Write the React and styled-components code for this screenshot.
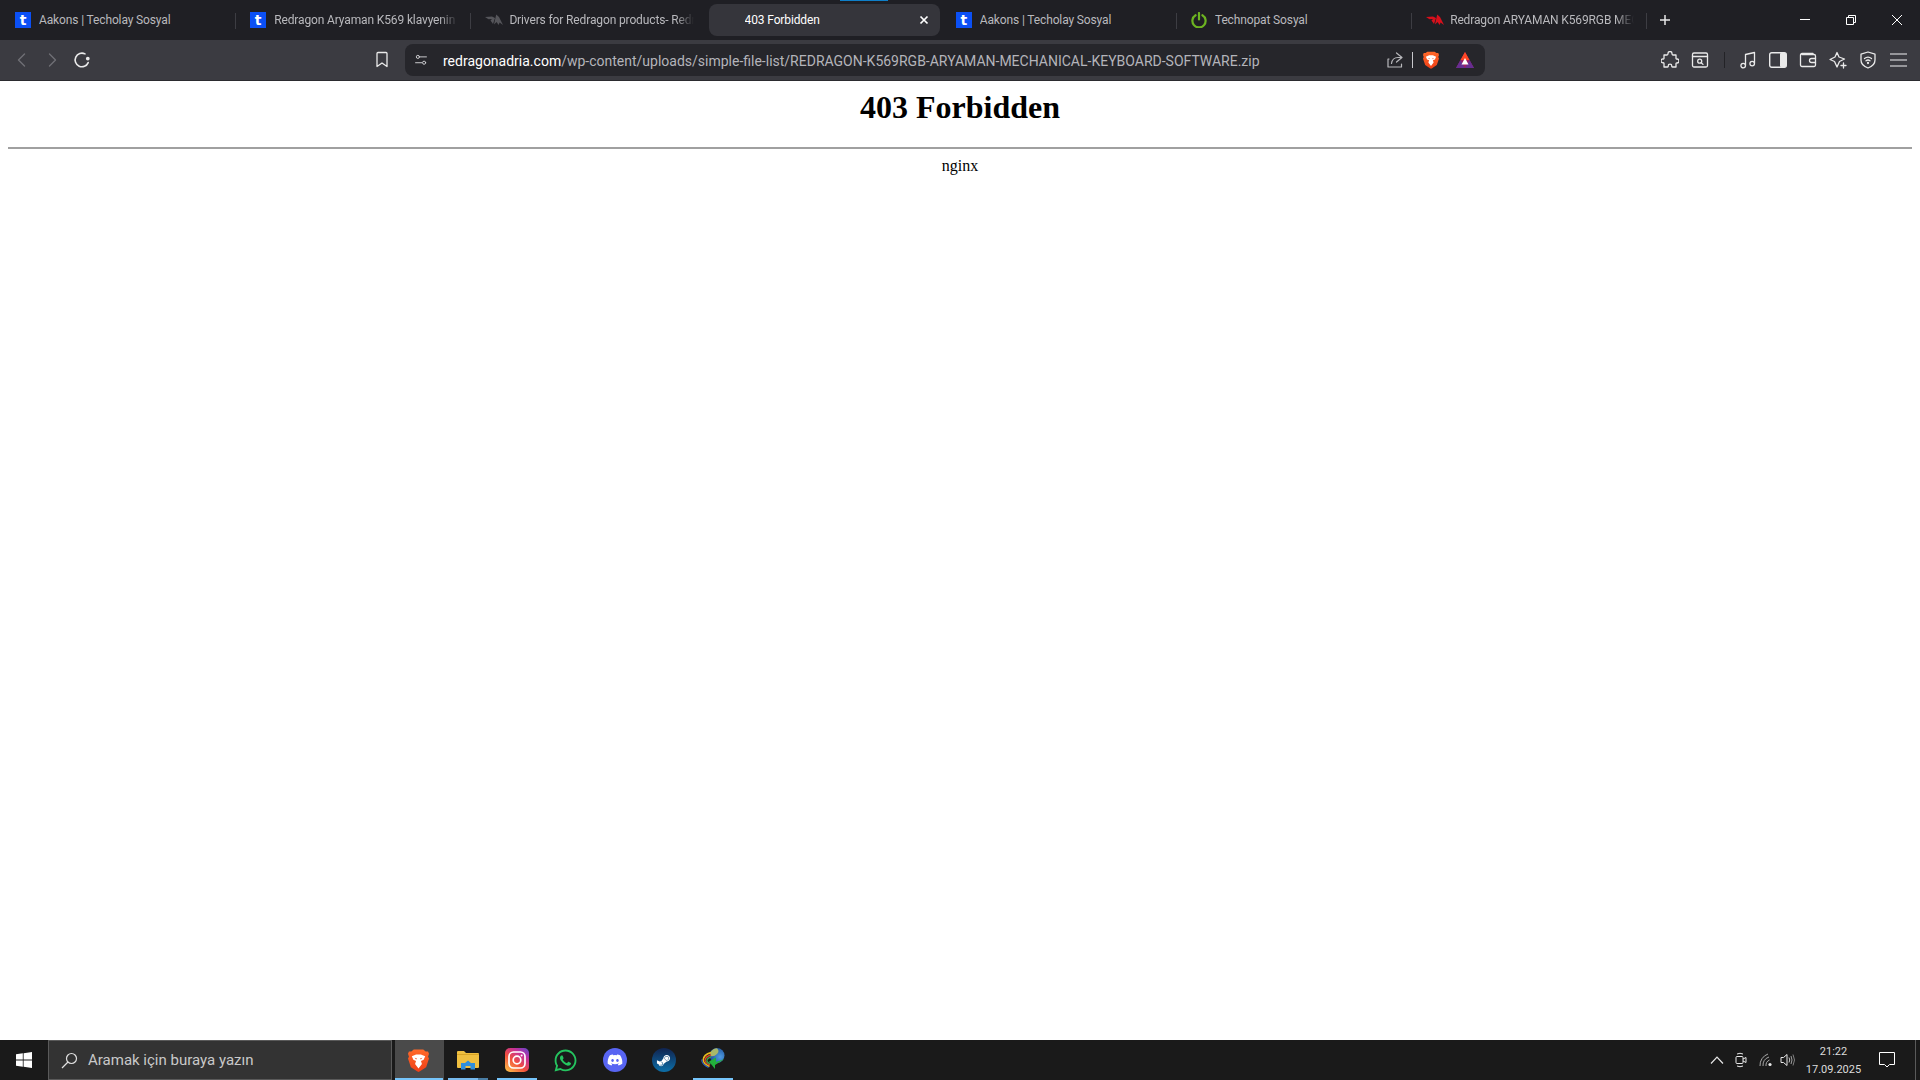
import React from 'react';
import styled, {createGlobalStyle} from 'styled-components';
import {FaDiscord, FaWhatsapp, FaSteamSymbol} from 'react-icons/fa';

const UI_FONT = `Roboto, "Open Sans", sans-serif`;

const tabs = [
	{title: 'Aakons | Techolay Sosyal', icon: 'techolay', sep: true},
	{title: 'Redragon Aryaman K569 klavyenin sürücüsü', icon: 'techolay', sep: true},
	{title: 'Drivers for Redragon products- Redragon', icon: 'dragonGray'},
	{title: '403 Forbidden', active: true},
	{title: 'Aakons | Techolay Sosyal', icon: 'techolay', sep: true},
	{title: 'Technopat Sosyal', icon: 'power', sep: true},
	{title: 'Redragon ARYAMAN K569RGB MECHANICAL', icon: 'dragonRed', sep: true}
];

const Stroke = ({size = 18, children, width = 1.4}) => (
	<svg width={size} height={size} viewBox="0 0 18 18" fill="none" stroke="currentColor" strokeWidth={width} strokeLinecap="round" strokeLinejoin="round">
		{children}
	</svg>
);

const Dragon = ({color}) => (
	<svg width="18" height="12" viewBox="0 0 18 12" fill={color}>
		<path d="M0 3 L7 2.4 L10 4 L8 10 L5.5 6.6 L7 5 L3.5 5.2 Z" />
		<path d="M9 10.5 L11.2 0.5 L14 3 L18 11 L14.6 8.6 L13.6 11 L11.6 8 Z" />
	</svg>
);

const PowerIcon = () => (
	<svg width="16" height="16" viewBox="0 0 16 16" fill="none" stroke="#6cb321" strokeWidth="2.2" strokeLinecap="round">
		<path d="M4.6 3.2 A6.6 6.6 0 1 0 11.4 3.2" />
		<path d="M8 1 V7.4" />
	</svg>
);

const Favicon = ({type}) => {
	if (type === 'techolay') return <TechBadge>t</TechBadge>;
	if (type === 'power') return <PowerIcon />;
	if (type === 'dragonRed') return <Dragon color="#d8101c" />;
	if (type === 'dragonGray') return <Dragon color="#55555a" />;
	return null;
};

const BraveIcon = ({id, width, height}) => (
	<svg width={width} height={height} viewBox="0 0 22 24">
		<defs>
			<linearGradient id={id} x1="0" y1="0" x2="0" y2="1">
				<stop offset="0" stopColor="#ff6a2a" />
				<stop offset="1" stopColor="#ef3f17" />
			</linearGradient>
		</defs>
		<path d="M6 0.5 H16 L18.5 2.5 L21 2.5 L22 5 L21 8 L22 10 L19 19 L12.5 23.2 L11 24 L9.5 23.2 L3 19 L0 10 L1 8 L0 5 L1 2.5 L3.5 2.5 Z" fill={`url(#${id})`} />
		<path d="M4 7.5 L8.5 5.6 H13.5 L18 7.5 L16.4 11.2 L13.6 12.4 L14.6 15.6 L11 20.4 L7.4 15.6 L8.4 12.4 L5.6 11.2 Z" fill="#fff" />
		<path d="M7 9.2 L9.4 9.9 L8.6 10.9 Z M15 9.2 L12.6 9.9 L13.4 10.9 Z" fill="#f0481c" />
	</svg>
);

const BatIcon = () => (
	<svg width="18" height="16" viewBox="0 0 18 16">
		<path d="M9 0 L18 16 H0 Z" fill="#9e1f63" />
		<path d="M9 0 L13.5 8 H4.5 Z" fill="#ff4724" />
		<path d="M0 16 L4.5 8 L9 16 Z" fill="#662d91" />
		<path d="M18 16 L13.5 8 L9 16 Z" fill="#662d91" />
		<path d="M9 6 L12.5 12.5 H5.5 Z" fill="#fff" />
	</svg>
);

const FolderIcon = () => (
	<svg width="22" height="20" viewBox="0 0 22 20">
		<path d="M0 2 a1 1 0 0 1 1 -1 H7 L9 3 H21 a1 1 0 0 1 1 1 V17 a1 1 0 0 1 -1 1 H1 a1 1 0 0 1 -1 -1 Z" fill="#f0c040" />
		<path d="M0 4 H22 V5 H0 Z" fill="#d9a526" />
		<path d="M4 19.5 V13 H8 L11 10.5 L14 13 H18 V19.5 H13.5 V16 H8.5 V19.5 Z" fill="#2f8fdc" />
	</svg>
);

const InstagramIcon = () => (
	<svg width="24" height="24" viewBox="0 0 24 24">
		<defs>
			<linearGradient id="ig" x1="0.1" y1="1" x2="0.9" y2="0">
				<stop offset="0" stopColor="#fdc04a" />
				<stop offset="0.4" stopColor="#f2503c" />
				<stop offset="0.75" stopColor="#c22f9c" />
				<stop offset="1" stopColor="#6a45c8" />
			</linearGradient>
		</defs>
		<rect width="24" height="24" rx="5" fill="url(#ig)" />
		<rect x="4" y="4" width="16" height="16" rx="4.5" fill="none" stroke="#fff" strokeWidth="1.7" />
		<circle cx="12" cy="12" r="3.8" fill="none" stroke="#fff" strokeWidth="1.7" />
		<circle cx="16.6" cy="7.4" r="1" fill="#fff" />
	</svg>
);

const IdmIcon = () => (
	<svg width="24" height="24" viewBox="0 0 24 24" fill="none">
		<defs>
			<radialGradient id="globe" cx="0.7" cy="0.6" r="0.7">
				<stop offset="0" stopColor="#4f9be0" />
				<stop offset="1" stopColor="#1c4f9a" />
			</radialGradient>
		</defs>
		<circle cx="16" cy="7.5" r="7.5" fill="url(#globe)" />
		<path d="M9.5 4 Q12 0.5 16 0.2 Q19 3 16 6 Q13 9 9.5 8 Z" fill="#a9b86a" />
		<path d="M10 4.6 Q2.5 6.5 2.2 12 Q2.5 16 8.5 18.5" stroke="#e6b81c" strokeWidth="1.6" />
		<path d="M10 7 Q4.5 8.5 4 12.5 Q4.5 15.5 9 17" stroke="#d9432a" strokeWidth="1.4" />
		<path d="M10 9 Q6 10 5.8 13 Q6.2 15 9.5 15.6" stroke="#3aa04a" strokeWidth="1.4" />
		<path d="M0.8 11.5 Q0.4 16 7.5 19.5" stroke="#2b62c0" strokeWidth="1.2" />
		<path d="M23.5 11 L15 14 V9.5 L8 13.5 L14 21 V17 Z" fill="#22b03c" />
	</svg>
);

const App = () => (
	<>
		<GlobalStyle />
		<Window>
			<TabStrip>
				{tabs.map(tab => (
					<Tab key={tab.title + tab.icon} $active={tab.active} $sep={tab.sep}>
						{tab.active && <TopMark />}
						<FavSlot><Favicon type={tab.icon} /></FavSlot>
						<TabTitle $active={tab.active} $fade={tab.title.length > 30}>{tab.title}</TabTitle>
						{tab.active && (
							<TabClose>
								<svg width="10" height="10" viewBox="0 0 10 10" stroke="#fff" strokeWidth="1.7"><path d="M1.5 1.5 L8.5 8.5 M8.5 1.5 L1.5 8.5" /></svg>
							</TabClose>
						)}
					</Tab>
				))}
				<NewTab>
					<svg width="12" height="12" viewBox="0 0 12 12" stroke="#e8e8e8" strokeWidth="1.5"><path d="M6 1 V11 M1 6 H11" /></svg>
				</NewTab>
				<WindowControls>
					<WindowButton>
						<svg width="10" height="10" viewBox="0 0 10 10" stroke="#fff"><path d="M0 4.5 H10" /></svg>
					</WindowButton>
					<WindowButton>
						<svg width="10" height="10" viewBox="0 0 10 10" fill="none" stroke="#fff"><path d="M0.5 2.5 H7.5 V9.5 H0.5 Z M2.5 2.5 V0.5 H9.5 V7.5 H7.5" /></svg>
					</WindowButton>
					<WindowButton>
						<svg width="12" height="12" viewBox="0 0 12 12" stroke="#fff"><path d="M1 1 L11 11 M11 1 L1 11" /></svg>
					</WindowButton>
				</WindowControls>
			</TabStrip>

			<Toolbar>
				<NavGroup>
					<IconButton $dim>
						<Stroke size={18}><path d="M11.5 3 L5.5 9 L11.5 15" /></Stroke>
					</IconButton>
					<IconButton $dim>
						<Stroke size={18}><path d="M6.5 3 L12.5 9 L6.5 15" /></Stroke>
					</IconButton>
					<IconButton>
						<Stroke size={18} width={1.6}>
							<path d="M12 2.9 A6.8 6.8 0 1 0 15.2 11.6" />
							<circle cx="14.8" cy="7.6" r="1.1" fill="currentColor" />
						</Stroke>
					</IconButton>
				</NavGroup>
				<BookmarkSlot>
					<Stroke size={18} width={1.3}><path d="M4 2.5 a1 1 0 0 1 1 -1 H13 a1 1 0 0 1 1 1 V15.5 L9 12 L4 15.5 Z" /></Stroke>
				</BookmarkSlot>
				<AddressBar>
					<SiteButton>
						<Stroke size={14} width={1.2}>
							<circle cx="5" cy="5" r="2" /><path d="M8 5 H16" /><circle cx="13" cy="12.5" r="2" /><path d="M2 12.5 H10" />
						</Stroke>
					</SiteButton>
					<Url><UrlHost>redragonadria.com</UrlHost>/wp-content/uploads/simple-file-list/REDRAGON-K569RGB-ARYAMAN-MECHANICAL-KEYBOARD-SOFTWARE.zip</Url>
					<ShareSlot>
						<Stroke size={18} width={1.2}><path d="M10.5 2 L16 6.5 L10.5 11 M16 6.5 H12 C8 6.5 6 9 5.5 12.5 M3 8 H2 V16 H15.5 V13" /></Stroke>
					</ShareSlot>
					<BarDivider />
					<BraveSlot><BraveIcon id="braveSmall" width={16} height={18} /></BraveSlot>
					<BatSlot><BatIcon /></BatSlot>
				</AddressBar>
				<RightGroup>
					<IconButton>
						<Stroke size={18} width={1.3}><path d="M7 2.5 a2 2 0 0 1 4 0 c0 1 .5 1.5 1 1.5 H15 V7.3 c0 .6 .6 .9 1 .7 a2 2 0 0 1 0 4 c-.4 -.2 -1 .1 -1 .7 V16 H11.5 c-.6 0 -.8 -.6 -.7 -1 a1.8 1.8 0 0 0 -3.6 0 c.1 .4 -.1 1 -.7 1 H3 V12.5 c0 -.6 -.6 -.9 -1 -.6 a2 2 0 0 1 0 -4 c.4 .3 1 0 1 -.6 V4 H6 c.5 0 1 -.5 1 -1.5 Z" /></Stroke>
					</IconButton>
					<IconButton>
						<Stroke size={18} width={1.3}><rect x="1.5" y="2" width="15" height="14" rx="1.5" /><path d="M1.5 5.5 H16.5" /><circle cx="8.7" cy="10.2" r="2" /><path d="M10.2 11.7 L12 13.4" /></Stroke>
					</IconButton>
					<ToolDivider />
					<IconButton>
						<Stroke size={18} width={1.3}><path d="M6.5 14 V3.5 L15.5 1.5 V12" /><circle cx="4.2" cy="14.6" r="2.3" /><circle cx="13.2" cy="12.6" r="2.3" /></Stroke>
					</IconButton>
					<IconButton>
						<svg width="18" height="16" viewBox="0 0 18 16"><rect x="0.7" y="0.7" width="16.6" height="14.6" rx="2" fill="none" stroke="currentColor" strokeWidth="1.4" /><rect x="11" y="1" width="6" height="14" rx="1" fill="currentColor" /></svg>
					</IconButton>
					<IconButton>
						<Stroke size={18} width={1.3}><path d="M14 3.5 V2.5 H3 a1.5 1.5 0 0 0 -1.5 1.5 V14 a1.5 1.5 0 0 0 1.5 1.5 H15 a1.5 1.5 0 0 0 1.5 -1.5 V5 a1.5 1.5 0 0 0 -1.5 -1.5 H3" /><path d="M16.5 7.5 H12.5 a2 2 0 0 0 0 4 H16.5" /></Stroke>
					</IconButton>
					<IconButton>
						<Stroke size={18} width={1.3}><path d="M8 1.5 L10 6 L15.5 8 L10.5 10.5 L8 16 L5.5 10.5 L1 8.5 L6 6 Z" /><path d="M14.5 12 V17 M12 14.5 H17" /></Stroke>
					</IconButton>
					<IconButton>
						<Stroke size={18} width={1.3}><path d="M9 1 L16 3.2 V9 C16 13 12.5 15.8 9 17 C5.5 15.8 2 13 2 9 V3.2 Z" /><path d="M5.5 7.5 Q9 4.8 12.5 7.5 M7 9.8 Q9 8.2 11 9.8" /><circle cx="9" cy="12" r="0.5" /></Stroke>
					</IconButton>
					<IconButton>
						<svg width="17" height="14" viewBox="0 0 17 14" stroke="#b5b5b8" strokeWidth="1.6"><path d="M0 1 H17 M0 7 H17 M0 13 H17" /></svg>
					</IconButton>
				</RightGroup>
			</Toolbar>

			<Page>
				<Heading>403 Forbidden</Heading>
				<Rule />
				<Server>nginx</Server>
			</Page>

			<Taskbar>
				<StartButton>
					<svg width="16" height="16" viewBox="0 0 16 16" fill="#fff">
						<path d="M0 2.3 L6.8 1.3 V7.6 H0 Z M7.6 1.2 L16 0 V7.6 H7.6 Z M0 8.4 H6.8 V14.7 L0 13.7 Z M7.6 8.4 H16 V16 L7.6 14.8 Z" />
					</svg>
				</StartButton>
				<SearchBox>
					<svg width="17" height="17" viewBox="0 0 17 17" fill="none" stroke="#e0e0e0" strokeWidth="1.2"><circle cx="10.5" cy="6.5" r="5" /><path d="M7 10 L1 16" /></svg>
					<SearchText>Aramak için buraya yazın</SearchText>
				</SearchBox>
				<TaskItems>
					<TaskItem $running $current><BraveIcon id="braveTask" width={21} height={23} /></TaskItem>
					<TaskItem $running $stacked><FolderIcon /></TaskItem>
					<TaskItem $running><InstagramIcon /></TaskItem>
					<TaskItem><FaWhatsapp size={25} color="#25c45f" /></TaskItem>
					<TaskItem><DiscordBadge><FaDiscord size={16} color="#fff" /></DiscordBadge></TaskItem>
					<TaskItem><SteamBadge><FaSteamSymbol size={15} color="#fff" /></SteamBadge></TaskItem>
					<TaskItem $running><IdmIcon /></TaskItem>
				</TaskItems>
				<Tray>
					<TrayIcon $w="24px">
						<svg width="14" height="8" viewBox="0 0 14 8" fill="none" stroke="#e8e8e8" strokeWidth="1.2"><path d="M1 7.5 L7 1.2 L13 7.5" /></svg>
					</TrayIcon>
					<TrayIcon $w="24px">
						<svg width="12" height="16" viewBox="0 0 12 16" fill="none" stroke="#e8e8e8" strokeWidth="1"><path d="M2 2 Q5 .5 8 2 M2 14 Q5 15.5 8 14" /><rect x="1" y="4.5" width="7" height="7" rx="1" /><path d="M8 7 L11 5.5 V10.5 L8 9" /></svg>
					</TrayIcon>
					<TrayIcon $w="25px">
						<svg width="14" height="14" viewBox="0 0 14 14" fill="none" stroke="#a8a8a8" strokeWidth="1"><path d="M1 13 A12 12 0 0 1 9 1 M4 13 A9 9 0 0 1 10 4 M7 13 A6 6 0 0 1 10.5 7" /><circle cx="11" cy="11.5" r="1.6" fill="#e8e8e8" stroke="none" /></svg>
					</TrayIcon>
					<TrayIcon $w="20px">
						<svg width="16" height="14" viewBox="0 0 16 14" fill="none" strokeWidth="1"><path d="M1 4.5 H3.5 L7 1.5 V12.5 L3.5 9.5 H1 Z" stroke="#e8e8e8" /><path d="M9 4.5 Q10.5 7 9 9.5" stroke="#c8c8c8" /><path d="M11 3 Q13 7 11 11" stroke="#a0a0a0" /><path d="M13 1.5 Q16 7 13 12.5" stroke="#808080" /></svg>
					</TrayIcon>
					<Clock>
						<span>21:22</span>
						<span>17.09.2025</span>
					</Clock>
					<NotifyButton>
						<svg width="16" height="16" viewBox="0 0 16 16" fill="none" stroke="#fff" strokeWidth="1"><path d="M.5 .5 H15.5 V12.5 H10.5 L8 15 L5.5 12.5 H.5 Z" /></svg>
					</NotifyButton>
					<ShowDesktop />
				</Tray>
			</Taskbar>
		</Window>
	</>
);

export default App;

const GlobalStyle = createGlobalStyle`
	html, body {
		margin: 0;
		padding: 0;
		background: #fff;
	}
`;

const Window = styled.div`
	width: 1920px;
	height: 1080px;
	display: flex;
	flex-direction: column;
	overflow: hidden;
	font-family: ${UI_FONT};
`;

const TabStrip = styled.div`
	height: 40px;
	flex: none;
	display: flex;
	background: #1f1f24;
`;

const Tab = styled.div`
	width: 235.2px;
	flex: none;
	box-sizing: border-box;
	position: relative;
	display: flex;
	align-items: center;
	padding-left: 15px;
	padding-right: 12px;

	&::before {
		content: '';
		display: ${p => (p.$active ? 'block' : 'none')};
		position: absolute;
		left: 3px;
		right: 1px;
		top: 4px;
		bottom: 4px;
		border-radius: 8px;
		background: #35353b;
	}

	&::after {
		content: '';
		display: ${p => (p.$sep ? 'block' : 'none')};
		position: absolute;
		right: -1px;
		top: 13px;
		height: 16px;
		width: 1px;
		background: #3d3d43;
	}
`;

const TopMark = styled.div`
	position: absolute;
	left: 134px;
	top: 0;
	width: 48px;
	height: 1px;
	background: #0f7fc8;
`;

const FavSlot = styled.div`
	position: relative;
	width: 24px;
	flex: none;
	display: flex;
	align-items: center;
`;

const TechBadge = styled.span`
	width: 16px;
	height: 16px;
	background: #0b50f5;
	color: #fff;
	font: bold 14px/16px "DejaVu Sans", sans-serif;
	text-align: center;
	display: block;
`;

const TabTitle = styled.div`
	position: relative;
	flex: 1;
	min-width: 0;
	white-space: nowrap;
	overflow: hidden;
	font-size: 12px;
	letter-spacing: -0.13px;
	line-height: 16px;
	color: ${p => (p.$active ? '#fff' : '#b9b9bd')};
	mask-image: ${p => (p.$fade ? 'linear-gradient(to right, #000 90%, transparent)' : 'none')};
`;

const TabClose = styled.div`
	position: absolute;
	right: 12px;
	top: 15px;
	height: 10px;
	display: flex;
`;

const NewTab = styled.div`
	width: 38px;
	flex: none;
	display: flex;
	align-items: center;
	justify-content: center;
`;

const WindowControls = styled.div`
	margin-left: auto;
	display: flex;
`;

const WindowButton = styled.div`
	width: 46px;
	display: flex;
	align-items: center;
	justify-content: center;
`;

const Toolbar = styled.div`
	height: 41px;
	flex: none;
	box-sizing: border-box;
	display: flex;
	align-items: center;
	padding: 0 7px;
	background: #3b3b41;
	border-bottom: 1px solid #2b2b2f;
`;

const NavGroup = styled.div`
	display: flex;
`;

const IconButton = styled.div`
	width: 30px;
	height: 30px;
	display: flex;
	align-items: center;
	justify-content: center;
	color: ${p => (p.$dim ? '#6f6f75' : '#eaeaea')};
`;

const BookmarkSlot = styled(IconButton)`
	margin-left: 270px;
`;

const AddressBar = styled.div`
	width: 1080px;
	height: 32px;
	margin-left: 8px;
	display: flex;
	align-items: center;
	border-radius: 8px;
	background: #26262b;
`;

const SiteButton = styled.div`
	width: 38px;
	flex: none;
	display: flex;
	justify-content: center;
	padding-right: 6px;
	box-sizing: border-box;
	color: #d5d5d8;
`;

const Url = styled.div`
	font-size: 14px;
	line-height: 20px;
	padding-top: 1px;
	color: #b4b4ba;
	white-space: nowrap;
`;

const UrlHost = styled.span`
	color: #fff;
`;

const ShareSlot = styled.div`
	margin-left: auto;
	display: flex;
	color: #b8b8bc;
`;

const BarDivider = styled.div`
	width: 1px;
	height: 16px;
	margin: 0 0 0 8px;
	background: #c8c8cc;
`;

const BraveSlot = styled.div`
	display: flex;
	margin-left: 10px;
`;

const BatSlot = styled.div`
	display: flex;
	margin: 0 11px 0 17px;
`;

const RightGroup = styled.div`
	margin-left: auto;
	display: flex;
	align-items: center;
`;

const ToolDivider = styled.div`
	width: 1px;
	height: 16px;
	margin: 0 8px 0 9px;
	background: #232327;
`;

const Page = styled.div`
	flex: 1;
	background: #fff;
	padding: 8px 8px 0;
	font-family: "Liberation Serif", "Times New Roman", serif;
	color: #000;
	text-align: center;
`;

const Heading = styled.h1`
	margin: 0 0 21px;
	font-size: 32px;
	line-height: 37px;
	font-weight: bold;
`;

const Rule = styled.div`
	height: 2px;
	background: #a0a0a0;
`;

const Server = styled.div`
	margin-top: 8px;
	font-size: 16px;
	line-height: 18px;
`;

const Taskbar = styled.div`
	height: 40px;
	flex: none;
	display: flex;
	background: #1a1a1a;
`;

const StartButton = styled.div`
	width: 48px;
	display: flex;
	align-items: center;
	justify-content: center;
`;

const SearchBox = styled.div`
	width: 344px;
	box-sizing: border-box;
	display: flex;
	align-items: center;
	gap: 10px;
	padding-left: 12px;
	background: #333;
	border: 1px solid #5a5a5a;
`;

const SearchText = styled.span`
	font-size: 15px;
	color: #c9c9c9;
`;

const TaskItems = styled.div`
	display: flex;
	margin-left: 3px;
`;

const TaskItem = styled.div`
	position: relative;
	width: 49px;
	box-sizing: border-box;
	padding-right: 2px;
	display: flex;
	align-items: center;
	justify-content: center;
	background: ${p => (p.$current ? '#4a4a4a' : 'transparent')};

	&::after {
		content: '';
		display: ${p => (p.$running ? 'block' : 'none')};
		position: absolute;
		left: ${p => (p.$current ? '0' : '4px')};
		right: ${p => (p.$current ? '1px' : '5px')};
		bottom: 0;
		height: 2px;
		background: ${p => (p.$stacked ? 'linear-gradient(to right, #76b9ed 76%, #4a7ea5 76%)' : '#76c5fb')};
	}
`;

const DiscordBadge = styled.div`
	width: 24px;
	height: 24px;
	border-radius: 50%;
	background: #5865f2;
	display: flex;
	align-items: center;
	justify-content: center;
`;

const SteamBadge = styled(DiscordBadge)`
	background: linear-gradient(to bottom, #10234f, #0d6fa8);
`;

const Tray = styled.div`
	margin-left: auto;
	display: flex;
	align-items: center;
`;

const TrayIcon = styled.div`
	width: ${p => p.$w};
	display: flex;
	justify-content: center;
`;

const Clock = styled.div`
	width: 69px;
	margin-left: 1px;
	padding-top: 1px;
	display: flex;
	flex-direction: column;
	align-items: center;
	font-size: 11px;
	line-height: 18px;
	color: #dcdcdc;
`;

const NotifyButton = styled.div`
	width: 34px;
	margin-left: 2px;
	display: flex;
	justify-content: center;
`;

const ShowDesktop = styled.div`
	width: 1px;
	height: 40px;
	margin: 0 4px 0 11px;
	background: #5a5a5a;
`;
